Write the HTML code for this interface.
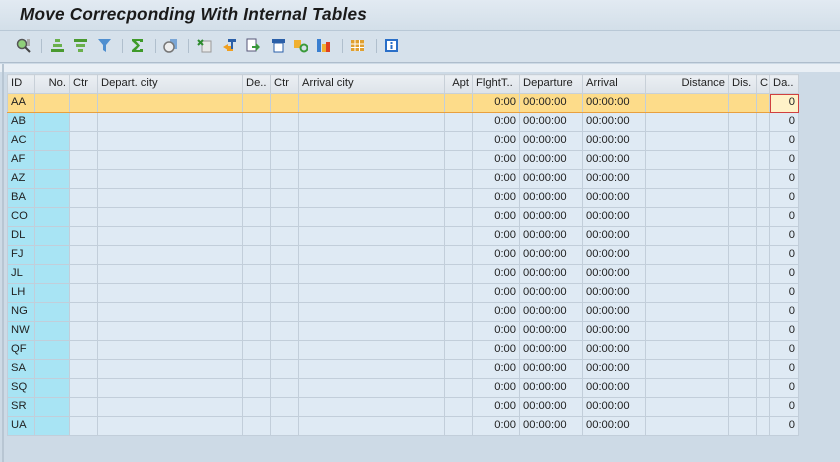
<!DOCTYPE html>
<html><head><style>
*{margin:0;padding:0;box-sizing:border-box}
body{width:840px;height:462px;overflow:hidden;background:#cddae6;font-family:"Liberation Sans",Arial,sans-serif;position:relative}
#title{position:absolute;left:0;top:0;width:840px;height:31px;background:linear-gradient(#e2eaf2,#d3dfe9);border-bottom:1px solid #b9c8d6}
#title span{position:absolute;left:20px;top:4px;font-size:17.2px;font-weight:bold;font-style:italic;color:#1a1a1a;letter-spacing:0.2px}
#tb{position:absolute;left:0;top:31px;width:840px;height:32px;background:#d6e1eb;border-bottom:1px solid #aebdcc}
#strip{position:absolute;left:0;top:64px;width:840px;height:8px;background:#e9eff5}
#lb{position:absolute;left:2px;top:64px;width:2px;height:398px;background:#b8c6d3}
.ic{position:absolute;top:7px;width:15px;height:15px}
.sep{position:absolute;top:8px;width:1px;height:14px;background:#b0bfcd}
table{position:absolute;left:7px;top:74px;width:791px;border-collapse:collapse;table-layout:fixed;font-size:11.2px;color:#222}
td,th{height:19px;line-height:14px;padding:0 3px 2px;border:1px solid #c2ceda;white-space:nowrap;overflow:hidden;font-weight:normal;text-align:left;background:#dfeaf4}
th{background:linear-gradient(#ebeff3,#dde3e9);border-color:#c8d0d8;color:#222}
td.k{background:#a8e4f4}
td.r,th.r{text-align:right}
tr.s td{background:#fddc8a;border-top:1px solid #e8a040;border-bottom:1px solid #e8a040}
tr.s td.f{background:#fff2c8;outline:1px solid #d04040;outline-offset:-1px}
</style></head><body>
<div id="title"><span>Move Correcponding With Internal Tables</span></div>
<div id="tb">
<svg class="ic" style="left:16px" viewBox="0 0 15 15"><circle cx="6" cy="6" r="4.5" fill="#8fd07a" stroke="#555" stroke-width="1.5"/><line x1="9" y1="9" x2="14" y2="14" stroke="#444" stroke-width="2"/><rect x="11" y="1" width="3" height="7" fill="#aaa"/></svg>
<div class="sep" style="left:41px"></div>
<svg class="ic" style="left:50px" viewBox="0 0 15 15"><rect x="5" y="1" width="5" height="3" fill="#6ab04c"/><rect x="3" y="6" width="9" height="3" fill="#6ab04c"/><rect x="1" y="11" width="13" height="3" fill="#4a9a30"/></svg>
<svg class="ic" style="left:73px" viewBox="0 0 15 15"><rect x="1" y="1" width="13" height="3" fill="#4a9a30"/><rect x="3" y="6" width="9" height="3" fill="#6ab04c"/><rect x="5" y="11" width="5" height="3" fill="#6ab04c"/></svg>
<svg class="ic" style="left:97px" viewBox="0 0 15 15"><path d="M1 1h13l-5 6v7l-3-2v-5z" fill="#4f8fd0"/></svg>
<div class="sep" style="left:122px"></div>
<svg class="ic" style="left:130px" viewBox="0 0 15 15"><path d="M2 1h11v3h-3V3H6l4 4.5L6 12h4v-1h3v3H2v-2l5-4.5L2 3z" fill="#3f9a2a"/></svg>
<div class="sep" style="left:155px"></div>
<svg class="ic" style="left:163px" viewBox="0 0 15 15"><rect x="7" y="1" width="7" height="10" fill="#7aa6d6"/><circle cx="6" cy="9" r="5" fill="#eee" stroke="#777" stroke-width="1.5"/></svg>
<div class="sep" style="left:188px"></div>
<svg class="ic" style="left:197px" viewBox="0 0 15 15"><rect x="5" y="3" width="9" height="11" fill="#e8e8e8" stroke="#999"/><path d="M1 2l5 5M6 2l-5 5" stroke="#2e8b2e" stroke-width="2"/></svg>
<svg class="ic" style="left:222px" viewBox="0 0 15 15"><path d="M1 9l5-3v6z" fill="#f0a020"/><rect x="5" y="8" width="6" height="5" fill="#f0a020"/><path d="M6 1h8v3h-3v7h-2V4H6z" fill="#2a5fa8"/></svg>
<svg class="ic" style="left:246px" viewBox="0 0 15 15"><rect x="1" y="1" width="9" height="12" fill="#fff" stroke="#557"/><path d="M6 8h4v-3l4 4-4 4v-3H6z" fill="#3a9a3a"/></svg>
<svg class="ic" style="left:271px" viewBox="0 0 15 15"><rect x="1" y="1" width="13" height="4" fill="#2a5fa8"/><rect x="3" y="5" width="9" height="9" fill="#fff" stroke="#2a5fa8"/></svg>
<svg class="ic" style="left:293px" viewBox="0 0 15 15"><rect x="1" y="2" width="7" height="8" fill="#f0b030"/><circle cx="11" cy="10" r="3.5" fill="none" stroke="#3a9a3a" stroke-width="2"/></svg>
<svg class="ic" style="left:316px" viewBox="0 0 15 15"><rect x="1" y="1" width="4" height="13" fill="#3a7fd0"/><rect x="6" y="6" width="4" height="8" fill="#f0b030"/><rect x="10" y="4" width="4" height="10" fill="#e04020"/></svg>
<div class="sep" style="left:342px"></div>
<svg class="ic" style="left:350px" viewBox="0 0 15 15"><rect x="1" y="2" width="13" height="11" fill="#e0a030"/><path d="M1 6h13M1 9.5h13M5 2v11M9.5 2v11" stroke="#fff" stroke-width="1"/></svg>
<div class="sep" style="left:376px"></div>
<svg class="ic" style="left:384px" viewBox="0 0 15 15"><rect x="1" y="1" width="13" height="13" fill="#2a6fc8"/><rect x="3" y="3" width="9" height="9" fill="#fff"/><rect x="6.5" y="4" width="2" height="2" fill="#2a6fc8"/><rect x="6.5" y="7" width="2" height="4" fill="#2a6fc8"/></svg>
</div>
<div id="strip"></div>
<div id="lb"></div>
<table>
<colgroup><col style="width:27px"><col style="width:35px"><col style="width:28px"><col style="width:145px"><col style="width:28px"><col style="width:28px"><col style="width:146px"><col style="width:28px"><col style="width:47px"><col style="width:63px"><col style="width:63px"><col style="width:83px"><col style="width:28px"><col style="width:13px"><col style="width:29px"></colgroup>
<tr><th>ID</th><th class="r">No.</th><th>Ctr</th><th>Depart. city</th><th>De..</th><th>Ctr</th><th>Arrival city</th><th class="r">Apt</th><th>FlghtT..</th><th>Departure</th><th>Arrival</th><th class="r">Distance</th><th>Dis.</th><th>C</th><th>Da..</th></tr>
<tr class="s"><td>AA</td><td></td><td></td><td></td><td></td><td></td><td></td><td></td><td class="r">0:00</td><td>00:00:00</td><td>00:00:00</td><td></td><td></td><td></td><td class="r f">0</td></tr>
<tr><td class="k">AB</td><td class="k"></td><td></td><td></td><td></td><td></td><td></td><td></td><td class="r">0:00</td><td>00:00:00</td><td>00:00:00</td><td></td><td></td><td></td><td class="r">0</td></tr>
<tr><td class="k">AC</td><td class="k"></td><td></td><td></td><td></td><td></td><td></td><td></td><td class="r">0:00</td><td>00:00:00</td><td>00:00:00</td><td></td><td></td><td></td><td class="r">0</td></tr>
<tr><td class="k">AF</td><td class="k"></td><td></td><td></td><td></td><td></td><td></td><td></td><td class="r">0:00</td><td>00:00:00</td><td>00:00:00</td><td></td><td></td><td></td><td class="r">0</td></tr>
<tr><td class="k">AZ</td><td class="k"></td><td></td><td></td><td></td><td></td><td></td><td></td><td class="r">0:00</td><td>00:00:00</td><td>00:00:00</td><td></td><td></td><td></td><td class="r">0</td></tr>
<tr><td class="k">BA</td><td class="k"></td><td></td><td></td><td></td><td></td><td></td><td></td><td class="r">0:00</td><td>00:00:00</td><td>00:00:00</td><td></td><td></td><td></td><td class="r">0</td></tr>
<tr><td class="k">CO</td><td class="k"></td><td></td><td></td><td></td><td></td><td></td><td></td><td class="r">0:00</td><td>00:00:00</td><td>00:00:00</td><td></td><td></td><td></td><td class="r">0</td></tr>
<tr><td class="k">DL</td><td class="k"></td><td></td><td></td><td></td><td></td><td></td><td></td><td class="r">0:00</td><td>00:00:00</td><td>00:00:00</td><td></td><td></td><td></td><td class="r">0</td></tr>
<tr><td class="k">FJ</td><td class="k"></td><td></td><td></td><td></td><td></td><td></td><td></td><td class="r">0:00</td><td>00:00:00</td><td>00:00:00</td><td></td><td></td><td></td><td class="r">0</td></tr>
<tr><td class="k">JL</td><td class="k"></td><td></td><td></td><td></td><td></td><td></td><td></td><td class="r">0:00</td><td>00:00:00</td><td>00:00:00</td><td></td><td></td><td></td><td class="r">0</td></tr>
<tr><td class="k">LH</td><td class="k"></td><td></td><td></td><td></td><td></td><td></td><td></td><td class="r">0:00</td><td>00:00:00</td><td>00:00:00</td><td></td><td></td><td></td><td class="r">0</td></tr>
<tr><td class="k">NG</td><td class="k"></td><td></td><td></td><td></td><td></td><td></td><td></td><td class="r">0:00</td><td>00:00:00</td><td>00:00:00</td><td></td><td></td><td></td><td class="r">0</td></tr>
<tr><td class="k">NW</td><td class="k"></td><td></td><td></td><td></td><td></td><td></td><td></td><td class="r">0:00</td><td>00:00:00</td><td>00:00:00</td><td></td><td></td><td></td><td class="r">0</td></tr>
<tr><td class="k">QF</td><td class="k"></td><td></td><td></td><td></td><td></td><td></td><td></td><td class="r">0:00</td><td>00:00:00</td><td>00:00:00</td><td></td><td></td><td></td><td class="r">0</td></tr>
<tr><td class="k">SA</td><td class="k"></td><td></td><td></td><td></td><td></td><td></td><td></td><td class="r">0:00</td><td>00:00:00</td><td>00:00:00</td><td></td><td></td><td></td><td class="r">0</td></tr>
<tr><td class="k">SQ</td><td class="k"></td><td></td><td></td><td></td><td></td><td></td><td></td><td class="r">0:00</td><td>00:00:00</td><td>00:00:00</td><td></td><td></td><td></td><td class="r">0</td></tr>
<tr><td class="k">SR</td><td class="k"></td><td></td><td></td><td></td><td></td><td></td><td></td><td class="r">0:00</td><td>00:00:00</td><td>00:00:00</td><td></td><td></td><td></td><td class="r">0</td></tr>
<tr><td class="k">UA</td><td class="k"></td><td></td><td></td><td></td><td></td><td></td><td></td><td class="r">0:00</td><td>00:00:00</td><td>00:00:00</td><td></td><td></td><td></td><td class="r">0</td></tr>
</table>
</body></html>
